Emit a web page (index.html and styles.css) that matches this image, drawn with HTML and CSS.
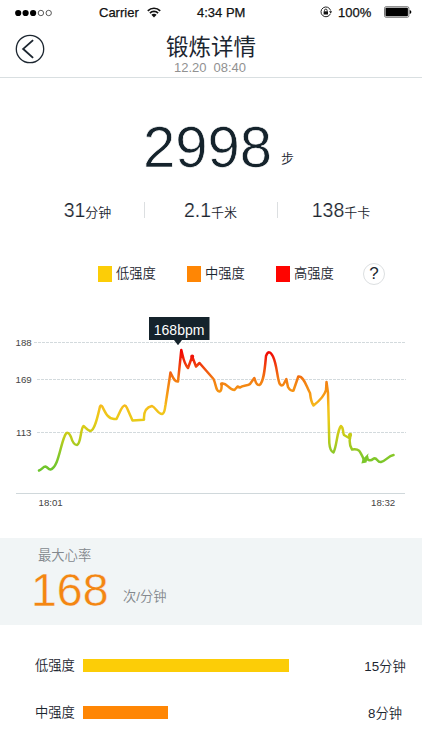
FILE: index.html
```html
<!DOCTYPE html>
<html lang="zh-CN">
<head>
  <meta charset="UTF-8" />
  <meta name="viewport" content="width=device-width, initial-scale=1" />
  <title>锻炼详情</title>
  <link rel="stylesheet" href="styles.css">
</head>
<body>

  <!-- Status bar -->
  <div class="status-bar">
    <svg class="signal" width="38" height="8" viewBox="0 0 38 8">
      <circle cx="3.2" cy="4" r="3.1" />
      <circle cx="10.6" cy="4" r="3.1" />
      <circle cx="18.1" cy="4" r="3.1" />
      <circle class="empty" cx="25.9" cy="4" r="2.7" />
      <circle class="empty" cx="33.7" cy="4" r="2.7" />
    </svg>
    <span class="carrier">Carrier</span>
    <svg class="wifi" width="14" height="11" viewBox="0 0 14 11">
      <path d="M0.8 3.8C4.3 0.4 9.7 0.4 13.2 3.8M2.9 6.1C5.2 3.9 8.8 3.9 11.1 6.1" />
      <path class="dot" d="M4.4 7.7C5.9 6.4 8.1 6.4 9.6 7.7L7 10.6Z" />
    </svg>
    <span class="time">4:34 PM</span>
    <svg class="lock" width="12" height="12" viewBox="0 0 12 12">
      <path d="M10.4 7.8A4.9 4.9 0 1 1 10.6 4.5" />
      <path class="fill" d="M9 5.3H12L10.8 7.4Z" />
      <rect class="fill" x="3.6" y="5.3" width="4.4" height="3.2" />
      <path d="M4.5 5.4V4.4A1.3 1.3 0 0 1 7.1 4.4V5.4" />
    </svg>
    <span class="percent">100%</span>
    <svg class="battery" width="28" height="12" viewBox="0 0 28 12">
      <rect x="0.5" y="0.7" width="24.4" height="10.6" rx="1.6" fill="none" stroke="#555" stroke-width="0.8" />
      <rect x="1.5" y="1.7" width="22.4" height="8.6" rx="0.8" />
      <path d="M25.7 4.1Q27.4 4.6 27.4 6T25.7 7.9Z" />
    </svg>
  </div>

  <!-- Title bar -->
  <header class="header">
    <a href="#" class="back" aria-label="返回">
      <svg width="30" height="30" viewBox="0 0 30 30">
        <circle cx="15" cy="15" r="13.7" />
        <path class="arrow" d="M18.1 6.1L8.2 14.9L18.1 23.9" />
      </svg>
    </a>
    <h1>锻炼详情</h1>
    <p class="date"><span>12.20</span><span>08:40</span></p>
  </header>

  <section class="steps">
    <span class="steps-number">2998</span>
    <span class="steps-unit">步</span>
  </section>

  <section class="stats">
    <div class="stat"><b>31</b>分钟</div>
    <div class="stat"><b>2.1</b>千米</div>
    <div class="stat"><b>138</b>千卡</div>
  </section>

  <section class="legend">
    <div class="legend-item"><i class="low"></i><span>低强度</span></div>
    <div class="legend-item"><i class="mid"></i><span>中强度</span></div>
    <div class="legend-item"><i class="high"></i><span>高强度</span></div>
    <span class="help">?</span>
  </section>

  <!-- Heart rate chart -->
  <svg class="chart" width="422" height="206" viewBox="0 310 422 206">
    <defs>
      <linearGradient id="rate" gradientUnits="userSpaceOnUse" x1="0" y1="350" x2="0" y2="470">
        <stop offset="0" stop-color="#f20000" />
        <stop offset="0.09" stop-color="#f02a0c" />
        <stop offset="0.24" stop-color="#f27a12" />
        <stop offset="0.38" stop-color="#f79c14" />
        <stop offset="0.48" stop-color="#f5c01c" />
        <stop offset="0.58" stop-color="#eacb18" />
        <stop offset="0.72" stop-color="#c3cc18" />
        <stop offset="0.86" stop-color="#8bc828" />
        <stop offset="1" stop-color="#6cc52c" />
      </linearGradient>
    </defs>
    <g class="grid">
      <path d="M34 342.5H406M37 379.5H406M37 432.5H406" />
      <path class="axis" d="M16 493.5H405" />
    </g>
    <g class="labels">
      <text x="15.5" y="346">188</text>
      <text x="15.5" y="383.2">169</text>
      <text x="16" y="436">113</text>
      <text x="38.5" y="506.2">18:01</text>
      <text x="371" y="506.2">18:32</text>
    </g>
    <path class="line" d="M39 470.5C42 469.5 43 466.5 45.5 466.5C48 467 48 469.7 50.5 469.5C58 468 60 447 64.500 436.500Q67.500 429 71 437C73 444 75 445 77 445C81 444 80.500 428 83.500 426C86 428 88 431 90.500 431C95 430 98 415 100 406.500Q101 404.500 102.500 407C106 414 108 418.500 114 419H116.500L121 409.500Q124.500 402.500 127 408L132.500 420.500L144 419.800C143.500 411 147 407 152 406C156 408 158 414 162 414C165 413 164.500 410 165.500 405L170.500 372.500C173 377 174 382 178 381.500L181.300 350C183.500 359 184 364 188 368L192.200 356.500L196 366.500L199.500 363L213.500 379C216 384 216 392 219.500 391.500C223 391 220.500 384 222.500 383.500C227 383 229 390 234.500 390L237.500 386.500L240 387.500C243 385 248 386 250 384L254.300 378C256 381 255 385 259.500 385C264 382 265 367 266 356Q269 348.500 273 356.500C277 365 277 377 279.500 383.500Q282 387.500 284 383.500L286.300 379L288 387Q290.500 391.500 293.500 390.500L298.300 376.500C304 376 306 386 310 393Q311 402 313.500 405.500C318 402 324 397 326 390L326.500 382L328 393L329.300 443Q330 451.500 333.500 452.500C337 446 337 430 341 426C344 428 342.500 433 344 435L350 438.500L350.500 434C349 441 349.500 446 352 449.500C359 448 360 451 364.500 461L367.300 457C367 461 371 461 373 459C377 456 377 463 381 462C386 461 388 456 393.500 455" />
    <circle class="knot" cx="192.200" cy="356.500" r="0.800" stroke="#f01408" />
    <circle class="knot" cx="221.500" cy="384" r="0.500" stroke="#f28312" />
    <circle class="knot" cx="350" cy="435" r="0.900" stroke="#c5cc18" />
    <path class="knot" d="M363.500 460L366.500 457L365.500 461.500L363 462Z" stroke="#7bc72a" />
    <path class="tip" d="M149 317H209.500V340H182L178 345.200L174 340H149Z" />
    <text class="tip-text" x="153.800" y="334.800">168bpm</text>
  </svg>

  <section class="max-rate">
    <p class="max-title">最大心率</p>
    <p class="max-value"><b>168</b><span>次/分钟</span></p>
  </section>

  <section class="zones">
    <div class="zone">
      <span class="zone-name">低强度</span>
      <div class="track"><div class="bar low" style="width: 206px"></div></div>
      <span class="zone-time">15分钟</span>
    </div>
    <div class="zone">
      <span class="zone-name">中强度</span>
      <div class="track"><div class="bar mid" style="width: 85px"></div></div>
      <span class="zone-time">8分钟</span>
    </div>
  </section>

</body>
</html>
```
FILE: styles.css
```css
* {
  box-sizing: border-box;
}

body {
  margin: 0;
  height: 750px;
  overflow: hidden;
  background: #fff;
  color: #1c2630;
  font-family: "Liberation Sans", "Noto Sans CJK SC", sans-serif;
  font-weight: 350;
}

h1, p {
  margin: 0;
}

b {
  font-weight: 300;
}

svg {
  display: block;
  flex: none;
}

.status-bar {
  display: flex;
  align-items: center;
  height: 24px;
  padding-left: 15px;
  font-size: 13px;
  color: #111;
  white-space: nowrap;
  -webkit-text-stroke: 0.25px #111;
}

.signal {
  margin-top: 2px;
}

.signal .empty {
  fill: none;
  stroke: #333;
  stroke-width: 0.8;
}

.carrier {
  width: 41px;
  margin-left: 46px;
}

.wifi {
  margin-left: 7px;
}

.wifi path {
  fill: none;
  stroke: #111;
  stroke-width: 1.7;
}

.wifi .dot {
  fill: #111;
  stroke: none;
}

.time {
  width: 50px;
  margin-left: 36px;
}

.lock {
  margin-left: 73px;
}

.lock path {
  fill: none;
  stroke: #222;
  stroke-width: 1;
}

.lock .fill {
  fill: #111;
  stroke: none;
}

.percent {
  width: 34px;
  margin-left: 6px;
}

.battery {
  margin-left: 12px;
}

/* header */
.header {
  position: relative;
  height: 54px;
  border-bottom: 1px solid #d9dfe1;
  text-align: center;
}

.back {
  position: absolute;
  left: 15px;
  top: 10px;
}

.back svg {
  fill: none;
  stroke: #1c2630;
  stroke-width: 1.3;
}

.back .arrow {
  stroke-width: 1.9;
}

.header h1 {
  height: 37px;
  font-size: 22.5px;
  line-height: 48px;
  font-weight: 400;
}

.date {
  display: flex;
  justify-content: center;
  gap: 7px;
  padding-right: 2px;
  font-size: 13px;
  line-height: 14px;
  color: #919191;
}

/* steps */
.steps {
  display: flex;
  align-items: flex-start;
  height: 116px;
  padding: 36px 0 0 143px;
}

.steps-number {
  width: 138px;
  font-size: 58px;
  line-height: 66px;
  color: #15232c;
  -webkit-text-stroke: 0.7px #fff;
}

.steps-unit {
  padding-top: 35px;
  font-size: 13px;
  line-height: 20px;
}

.stats {
  display: flex;
  height: 32px;
  padding: 0 12px 0 32px;
}

.stat {
  width: 133px;
  height: 32px;
  padding-right: 2px;
  font-size: 13px;
  line-height: 32px;
  text-align: center;
  background: linear-gradient(#dcdfe1, #dcdfe1) right 8px / 1px 16px no-repeat;
}

.stat:first-child {
  width: 113px;
}

.stat:last-child {
  width: 128px;
  background: none;
}

.stat b {
  font-size: 19.5px;
  -webkit-text-stroke: 0.2px #fff;
}

/* legend */
.legend {
  display: flex;
  align-items: center;
  height: 84px;
  padding: 11px 0 0 98px;
}

.legend-item {
  display: flex;
  align-items: center;
  width: 89px;
  font-size: 13.3px;
}

.legend-item span {
  margin-bottom: 2px;
}

.legend-item i {
  width: 14px;
  height: 16px;
  margin-right: 4px;
}

.low {
  background: #fccd07;
}

.mid {
  background: #ff8604;
}

.high {
  background: #ff0400;
}

.help {
  width: 22px;
  height: 22px;
  margin-left: -2px;
  border: 1px solid #dcdfe1;
  border-radius: 50%;
  font-size: 17px;
  line-height: 20px;
  text-align: center;
}

/* chart */
.grid path {
  fill: none;
  stroke: #d3dadd;
  stroke-width: 1;
  stroke-dasharray: 3 1;
}

.grid .axis {
  stroke: #d0d8db;
  stroke-dasharray: none;
}

.labels text {
  font-size: 9.7px;
  font-weight: 400;
  fill: #444;
}

.line {
  fill: none;
  stroke: url(#rate);
  stroke-width: 2.5;
  stroke-linejoin: round;
  stroke-linecap: round;
}

.knot {
  fill: none;
  stroke-width: 2.4;
}

.tip {
  fill: #15232c;
}

.tip-text {
  fill: #fff;
  font-size: 14px;
}

/* max heart rate */
.max-rate {
  height: 87px;
  margin-top: 22px;
  padding: 8px 0 0 33px;
  background: #f1f5f6;
  color: #83888d;
}

.max-title {
  padding-left: 5px;
  font-size: 13.3px;
  line-height: 20px;
}

.max-value {
  display: flex;
  font-size: 13.3px;
  line-height: 48px;
}

.max-value b {
  width: 90px;
  margin-left: -2px;
  font-size: 46.5px;
  color: #f48612;
  -webkit-text-stroke: 0.4px #f1f5f6;
}

.max-value span {
  padding: 7px 0 0 2px;
}

/* zones */
.zones {
  padding-top: 17px;
}

.zone {
  display: flex;
  align-items: center;
  height: 47px;
  padding-left: 35px;
  font-size: 13.3px;
}

.zone-name {
  width: 48px;
  margin-bottom: 3px;
}

.track {
  width: 275px;
}

.bar {
  height: 13px;
}

.zone-time {
  width: 54px;
  text-align: center;
}
```
